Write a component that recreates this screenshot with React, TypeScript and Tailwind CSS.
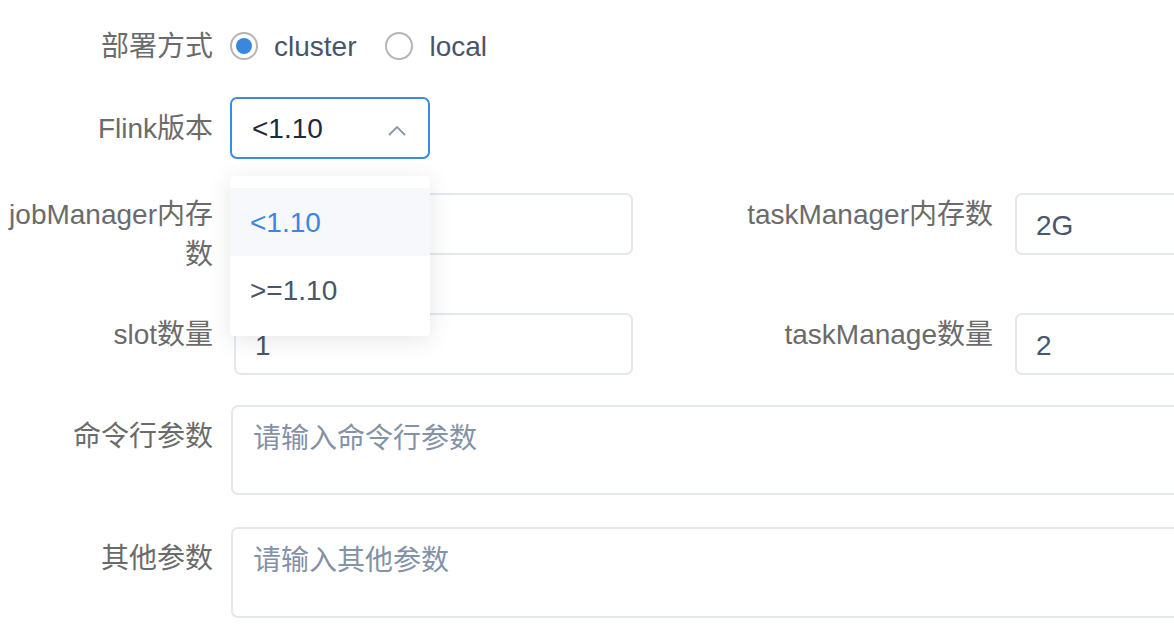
import React from 'react';

const font = { fontFamily: '"Liberation Sans", "Noto Sans CJK SC", sans-serif' };

const Label = ({ children, width, pad = 'pt-[2px]' }: { children: React.ReactNode; width: string; pad?: string }) => (
  <div className={`${width} ${pad} shrink-0 text-right text-[28px] leading-[40px] text-[#6b6b6b]`}>{children}</div>
);

const Radio = ({ checked, label }: { checked?: boolean; label: string }) => (
  <label className="flex items-center">
    <span className="w-[28px] h-[28px] rounded-full border-2 border-[#b5b5b5] flex items-center justify-center bg-white">
      {checked && <span className="w-[16px] h-[16px] rounded-full bg-[#3b86e0]" />}
    </span>
    <span className="ml-[16px] pt-[2px] text-[28px] text-[#475569]">{label}</span>
  </label>
);

const TextInput = ({ value, width }: { value: string; width: string }) => (
  <div className={`${width} h-[62px] shrink-0 rounded-[7px] border-2 border-[#e4e8ee] bg-white flex items-center pl-[19px] pt-[3px] text-[28px] text-[#475669]`}>
    {value}
  </div>
);

const TextArea = ({ placeholder, height }: { placeholder: string; height: string }) => (
  <div className={`w-[1000px] ${height} shrink-0 rounded-[7px] border-2 border-[#e4e8ee] bg-white pl-[20px] pt-[11px] text-[28px] leading-[42px] text-[#8492a6]`}>
    {placeholder}
  </div>
);

export default function App() {
  return (
    <div className="w-[1174px] h-[630px] overflow-hidden bg-white" style={font}>
      <div className="pt-[15px]">
        {/* 部署方式 */}
        <div className="flex items-center h-[62px]">
          <Label width="w-[213px]">部署方式</Label>
          <div className="ml-[17px] flex items-center gap-[29px]">
            <Radio checked label="cluster" />
            <Radio label="local" />
          </div>
        </div>

        {/* Flink版本 */}
        <div className="flex items-center h-[62px] mt-[20px] relative z-10">
          <Label width="w-[213px]">Flink版本</Label>
          <div className="ml-[17px] relative">
            <div className="w-[200px] h-[62px] rounded-[7px] border-2 border-[#3d8ae2] bg-white flex items-center justify-between pl-[20px] pr-[22px]">
              <span className="pt-[2px] text-[28px] text-[#1f2937]">&lt;1.10</span>
              <svg width="18" height="11" viewBox="0 0 18 11" className="mt-[5px]">
                <polyline points="1,10 9,2 17,10" fill="none" stroke="#8a95a8" strokeWidth="1.8" />
              </svg>
            </div>
            <div className="absolute left-0 top-[79px] w-[200px] bg-white rounded-[4px] py-[12px] shadow-[0_4px_24px_rgba(0,0,0,0.1)]">
              <div className="h-[68px] flex items-center pl-[20px] pt-[2px] bg-[#f6f8fb] text-[28px] text-[#3b86e0]">&lt;1.10</div>
              <div className="h-[68px] flex items-center pl-[20px] pt-[2px] text-[28px] text-[#475669]">&gt;=1.10</div>
            </div>
          </div>
        </div>

        {/* memory row */}
        <div className="flex items-start h-[62px] mt-[34px]">
          <div className="w-[700px] flex items-start shrink-0">
            <Label width="w-[213px]">jobManager内存数</Label>
            <div className="ml-[21px]">
              <TextInput value="" width="w-[399px]" />
            </div>
          </div>
          <Label width="w-[293px]">taskManager内存数</Label>
          <div className="ml-[22px]">
            <TextInput value="2G" width="w-[400px]" />
          </div>
        </div>

        {/* slot row */}
        <div className="flex items-start h-[62px] mt-[58px]">
          <div className="w-[700px] flex items-start shrink-0">
            <Label width="w-[213px]">slot数量</Label>
            <div className="ml-[21px]">
              <TextInput value="1" width="w-[399px]" />
            </div>
          </div>
          <Label width="w-[293px]">taskManage数量</Label>
          <div className="ml-[22px]">
            <TextInput value="2" width="w-[400px]" />
          </div>
        </div>

        {/* 命令行参数 */}
        <div className="flex items-start mt-[30px]">
          <Label width="w-[213px]" pad="pt-[12px]">命令行参数</Label>
          <div className="ml-[18px]">
            <TextArea placeholder="请输入命令行参数" height="h-[90px]" />
          </div>
        </div>

        {/* 其他参数 */}
        <div className="flex items-start mt-[32px]">
          <Label width="w-[213px]" pad="pt-[12px]">其他参数</Label>
          <div className="ml-[18px]">
            <TextArea placeholder="请输入其他参数" height="h-[91px]" />
          </div>
        </div>
      </div>
    </div>
  );
}
